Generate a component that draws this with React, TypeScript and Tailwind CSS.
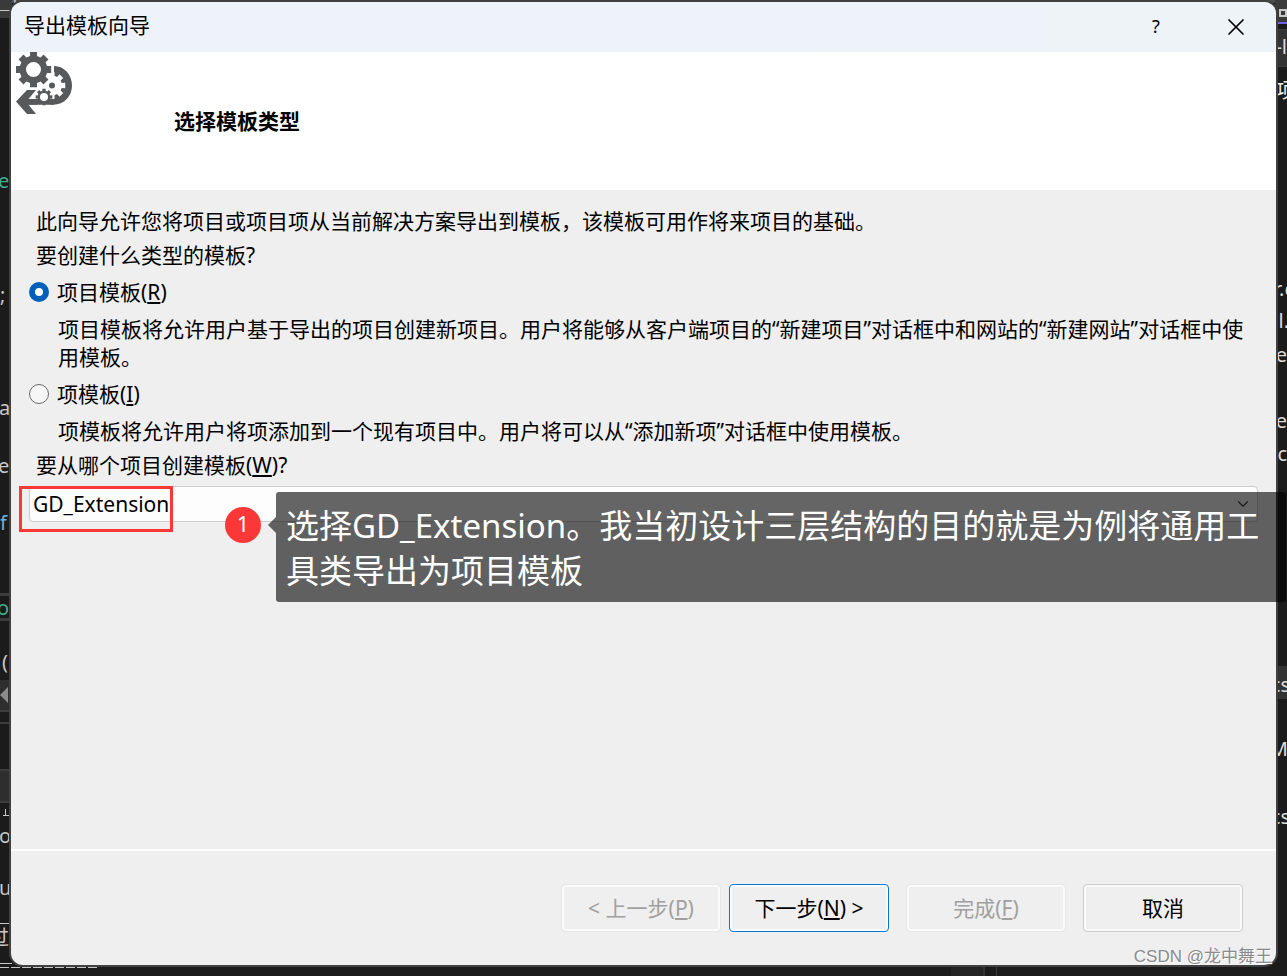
import { useState } from 'react';
import { ChevronDown, X } from 'lucide-react';

const UI_FONT = "font-['Noto_Sans','Noto_Sans_CJK_SC',sans-serif]";

// pieces of the editor window that stick out around the dialog
const EDITOR_BARS = [
  'left-0 top-0 h-[3px] w-full bg-[#4a4a4a]',
  'left-0 top-0 h-[18px] w-3 bg-[#3a3a3a]',
  'left-0 top-[10px] h-px w-3 bg-[#c8c8c8]',
  'left-0 top-[593px] h-[3px] w-3 bg-[#3d3d3d]',
  'left-0 top-[618px] h-[3px] w-3 bg-[#3d3d3d]',
  'left-0 top-[680px] h-[30px] w-3 bg-[#2e2e2e]',
  'left-0 top-[710px] h-[2px] w-3 bg-[#3d3d3d]',
  'left-0 top-[722px] h-[2px] w-3 bg-[#3d3d3d]',
  'left-0 top-[769px] h-[34px] w-3 border-y-2 border-[#3d3d3d] bg-[#2e2e2e]',
  'left-[3px] top-[815px] h-px w-[6px] bg-[#c8c8c8]',
  'left-[5px] top-[809px] h-[6px] w-px bg-[#c8c8c8]',
  'left-0 top-[923px] h-px w-3 bg-[#c8c8c8]',
  'right-0 top-0 h-[22px] w-3 bg-[#3a3a3a]',
  'right-0 top-[22px] h-[2px] w-3 bg-[#7160e8]',
  'right-0 top-[29px] h-[38px] w-3 border-y border-[#3d3d3d] bg-[#333333]',
  'right-0 top-[666px] h-[33px] w-3 bg-[#333333]',
  'bottom-0 left-[951px] h-[10px] w-[34px] border-r-2 border-[#333333] bg-[#242424]',
  'bottom-0 left-[996px] h-[10px] w-px bg-[#3d3d3d]',
];

const EDITOR_TEXT = [
  { text: 'Program D07_Person', className: 'left-3 -top-[18px] text-[#b8b8b8]' },
  { text: 'TakeManMonCom()', className: 'left-[482px] -top-[18px] text-[#b8b8b8]' },
  { text: 'e', className: '-left-[2px] top-[167px] text-[#3fae8e]' },
  { text: ';', className: 'left-0 top-[281px] text-[#c8c8c8]' },
  { text: 'a', className: '-left-[1px] top-[394px] text-[#c8c8c8]' },
  { text: 'e', className: '-left-[2px] top-[452px] text-[#c8c8c8]' },
  { text: 'f', className: 'left-0 top-[509px] text-[#6cb2e0]' },
  { text: 'o', className: '-left-[3px] top-[594px] text-[#3fae8e]' },
  { text: '(', className: 'left-[2px] top-[648px] text-[#c8c8c8]' },
  { text: 'o', className: '-left-[1px] top-[822px] text-[#c8c8c8]' },
  { text: 'u', className: '-left-[1px] top-[874px] text-[#c8c8c8]' },
  { text: '过', className: '-left-[11px] top-[924px] text-[#c8c8c8]' },
  { text: '-l', className: 'right-0 top-[33px] text-[#dcdcdc]' },
  { text: '项', className: '-right-[9px] top-[77px] text-[#f0f0f0]' },
  { text: 'r.c', className: '-right-[7px] top-[275px] text-[#dcdcdc]' },
  { text: 'el.', className: '-right-[2px] top-[307px] text-[#dcdcdc]' },
  { text: 'e', className: 'right-0 top-[341px] text-[#dcdcdc]' },
  { text: 'e', className: 'right-0 top-[407px] text-[#dcdcdc]' },
  { text: 'c', className: 'right-0 top-[440px] text-[#dcdcdc]' },
  { text: 'cs', className: '-right-[3px] top-[671px] text-[#dcdcdc]' },
  { text: 'M', className: '-right-[1px] top-[735px] text-[#dcdcdc]' },
  { text: 'cs', className: '-right-[3px] top-[803px] text-[#dcdcdc]' },
];

function EditorBackdrop() {
  return (
    <div aria-hidden="true" className="absolute inset-0 overflow-hidden bg-[#1b1b1b]">
      {EDITOR_BARS.map((bar) => (
        <div key={bar} className={`absolute ${bar}`} />
      ))}
      {EDITOR_TEXT.map(({ text, className }) => (
        <span key={className} className={`absolute whitespace-nowrap text-[20px] leading-[28px] ${className}`}>
          {text}
        </span>
      ))}
      <div className="absolute left-0 top-[687px] border-y-8 border-r-8 border-y-transparent border-r-[#8c8c8c]" />
      <div className="absolute left-0 top-[963px] w-3 border-t border-[#c8c8c8]" />
      <div className="absolute left-0 top-[967px] h-px w-[98px] bg-[repeating-linear-gradient(90deg,#c8c8c8_0_9px,transparent_9px_11px)]" />
      <div className="absolute right-0 top-[9px] h-2 w-2 border-2 border-[#c8c8c8]" />
    </div>
  );
}

function gearPath(cx: number, cy: number, outer: number, inner: number, teeth: number) {
  const step = (Math.PI * 2) / teeth;
  const at = (r: number, a: number) => `${(cx + r * Math.cos(a)).toFixed(2)} ${(cy + r * Math.sin(a)).toFixed(2)}`;
  const points: string[] = [];
  for (let i = 0; i < teeth; i++) {
    const a = i * step - Math.PI / 2;
    points.push(at(inner, a - step * 0.32), at(outer, a - step * 0.25), at(outer, a + step * 0.25), at(inner, a + step * 0.32));
  }
  return `M${points.join('L')}Z`;
}

function WizardIcon() {
  return (
    <svg viewBox="0 0 56 62" className="h-[62px] w-14 shrink-0" fill="#58595b" aria-hidden="true">
      <path d="M38 14C48.500 14 56 23 56 33.500S48.500 52.700 37 52.700H12.500L20 62H11L0 49.500L11 38H20L12.500 47H38Z" />
      <path d={gearPath(36, 33.5, 13.5, 10, 8)} fill="#fff" />
      <path d="M22 22H36V47H22Z" fill="#fff" />
      <circle cx="36" cy="33.500" r="3" />
      <path d={gearPath(28, 45, 10, 8.5, 8)} fill="#fff" />
      <path d="M12.500 47H38V52.700H12.500Z" />
      <path d={gearPath(28, 45, 8.5, 6.5, 8)} />
      <circle cx="28" cy="45" r="4" fill="#fff" />
      <path d="M38 19.500V14H38.500V20Z" />
      <path fillRule="evenodd" d={`${gearPath(17.5, 17.5, 18, 14, 8)}M25 17.500a7.500 7.500 0 1 0-15 0a7.500 7.500 0 1 0 15 0Z`} />
    </svg>
  );
}

interface TemplateOptionProps {
  id: string;
  label: string;
  accessKey: string;
  description: string;
  checked: boolean;
  onSelect: () => void;
}

function TemplateOption({ id, label, accessKey, description, checked, onSelect }: TemplateOptionProps) {
  return (
    <div className="pt-[9px]">
      <div className="flex items-center gap-2">
        <input
          id={id}
          type="radio"
          name="template-type"
          accessKey={accessKey}
          checked={checked}
          onChange={onSelect}
          className="h-5 w-5 appearance-none rounded-full border border-[#6a6a6a] bg-[#f6f6f6] checked:border-[6px] checked:border-[#005fb8] checked:bg-white"
        />
        <label htmlFor={id}>
          {label}(<u className="underline-offset-2">{accessKey}</u>)
        </label>
      </div>
      <p className="mt-[9px] pl-[29px]">{description}</p>
    </div>
  );
}

const BUTTON = 'h-12 w-40 rounded border bg-[#efefef] shadow-[inset_0_0_0_2px_#fbfbfb]';
const BUTTON_DISABLED = 'border-[#e6e6e6] text-[#a0a0a0]';

export default function App() {
  const [templateType, setTemplateType] = useState('project');

  return (
    <div className={`relative flex min-h-screen flex-col overflow-hidden px-[11px] pb-[11px] pt-[2px] text-[21px] leading-[28px] text-black ${UI_FONT}`}>
      <EditorBackdrop />

      <main className="relative flex flex-1 flex-col rounded-xl bg-[#efefef] shadow-[0_0_0_2px_#404040]">
        <header className="flex h-[50px] items-center rounded-t-xl bg-gradient-to-r from-[#eef3fa] to-[#edf3f7] pl-[13px] pr-7">
          <h1 className="flex-1 pb-1">导出模板向导</h1>
          <button aria-label="帮助" className="mr-14 h-8 w-6 pb-[2px] text-[18px]">?</button>
          <button aria-label="关闭" className="flex h-8 w-6 items-center justify-center">
            <X className="h-7 w-7 shrink-0" strokeWidth={1.5} />
          </button>
        </header>

        <section className="flex h-[138px] items-start bg-white pl-[5px]">
          <WizardIcon />
          <h2 className="ml-[102px] mt-[55px] font-bold">选择模板类型</h2>
        </section>

        <section className="flex-1 pb-8 pl-[18px] pr-[18px] pt-[17px]">
          <p className="pl-[7px]">此向导允许您将项目或项目项从当前解决方案导出到模板，该模板可用作将来项目的基础。</p>
          <p className="mt-[6px] pl-[7px]">要创建什么类型的模板?</p>
          <TemplateOption
            id="template-project"
            label="项目模板"
            accessKey="R"
            description="项目模板将允许用户基于导出的项目创建新项目。用户将能够从客户端项目的“新建项目”对话框中和网站的“新建网站”对话框中使用模板。"
            checked={templateType === 'project'}
            onSelect={() => setTemplateType('project')}
          />
          <TemplateOption
            id="template-item"
            label="项模板"
            accessKey="I"
            description="项模板将允许用户将项添加到一个现有项目中。用户将可以从“添加新项”对话框中使用模板。"
            checked={templateType === 'item'}
            onSelect={() => setTemplateType('item')}
          />
          <label htmlFor="source-project" className="mt-[6px] block pl-[7px]">
            要从哪个项目创建模板(<u className="underline-offset-2">W</u>)?
          </label>

          <div className="relative mt-[7px]">
            <select
              id="source-project"
              accessKey="W"
              className="block h-9 w-full appearance-none rounded-sm border border-[#cccccc] bg-[#fdfdfd] pl-[3px] leading-[28px]"
            >
              <option>GD_Extension</option>
            </select>
            <ChevronDown className="pointer-events-none absolute right-[6px] top-[9px] h-[18px] w-[18px] text-[#404040]" strokeWidth={1.5} />

            {/* step annotation */}
            <div className="pointer-events-none absolute -left-[10px] top-0 h-[46px] w-[154px] border-[3px] border-[#fa3838]" />
            <div className="absolute left-[196px] top-[21px] flex h-9 w-9 items-center justify-center rounded-full bg-[#fa3838] pb-[2px] text-white">
              1
            </div>
            <div className="absolute left-[239px] top-[31px] border-y-8 border-r-8 border-y-transparent border-r-black/60" />
            <div className="absolute -right-7 left-[247px] top-[6px] rounded-[3px] bg-black/60 px-[10px] pb-[9px] pt-[11px] text-[33px] leading-[45px] text-white">
              选择GD_Extension。我当初设计三层结构的目的就是为例将通用工具类导出为项目模板
            </div>
          </div>
        </section>

        <footer className="relative flex h-[116px] items-start justify-end rounded-b-xl border-t-2 border-white pr-[33px] pt-[33px]">
          <button disabled className={`${BUTTON} ${BUTTON_DISABLED} mr-2`}>
            &lt; 上一步(<u className="underline-offset-2">P</u>)
          </button>
          <button className={`${BUTTON} mr-[17px] border-[#0078d4]`}>
            下一步(<u className="underline-offset-2">N</u>) &gt;
          </button>
          <button disabled className={`${BUTTON} ${BUTTON_DISABLED} mr-[17px]`}>
            完成(<u className="underline-offset-2">F</u>)
          </button>
          <button className={`${BUTTON} border-[#cccccc]`}>取消</button>
          <span className="absolute -bottom-[6px] right-[4px] whitespace-nowrap font-['Liberation_Sans','Noto_Sans_CJK_SC',sans-serif] text-[17px] text-[#8a8a8a] [text-shadow:1px_1px_0_#ffffff]">
            CSDN @龙中舞王
          </span>
        </footer>
      </main>
    </div>
  );
}
